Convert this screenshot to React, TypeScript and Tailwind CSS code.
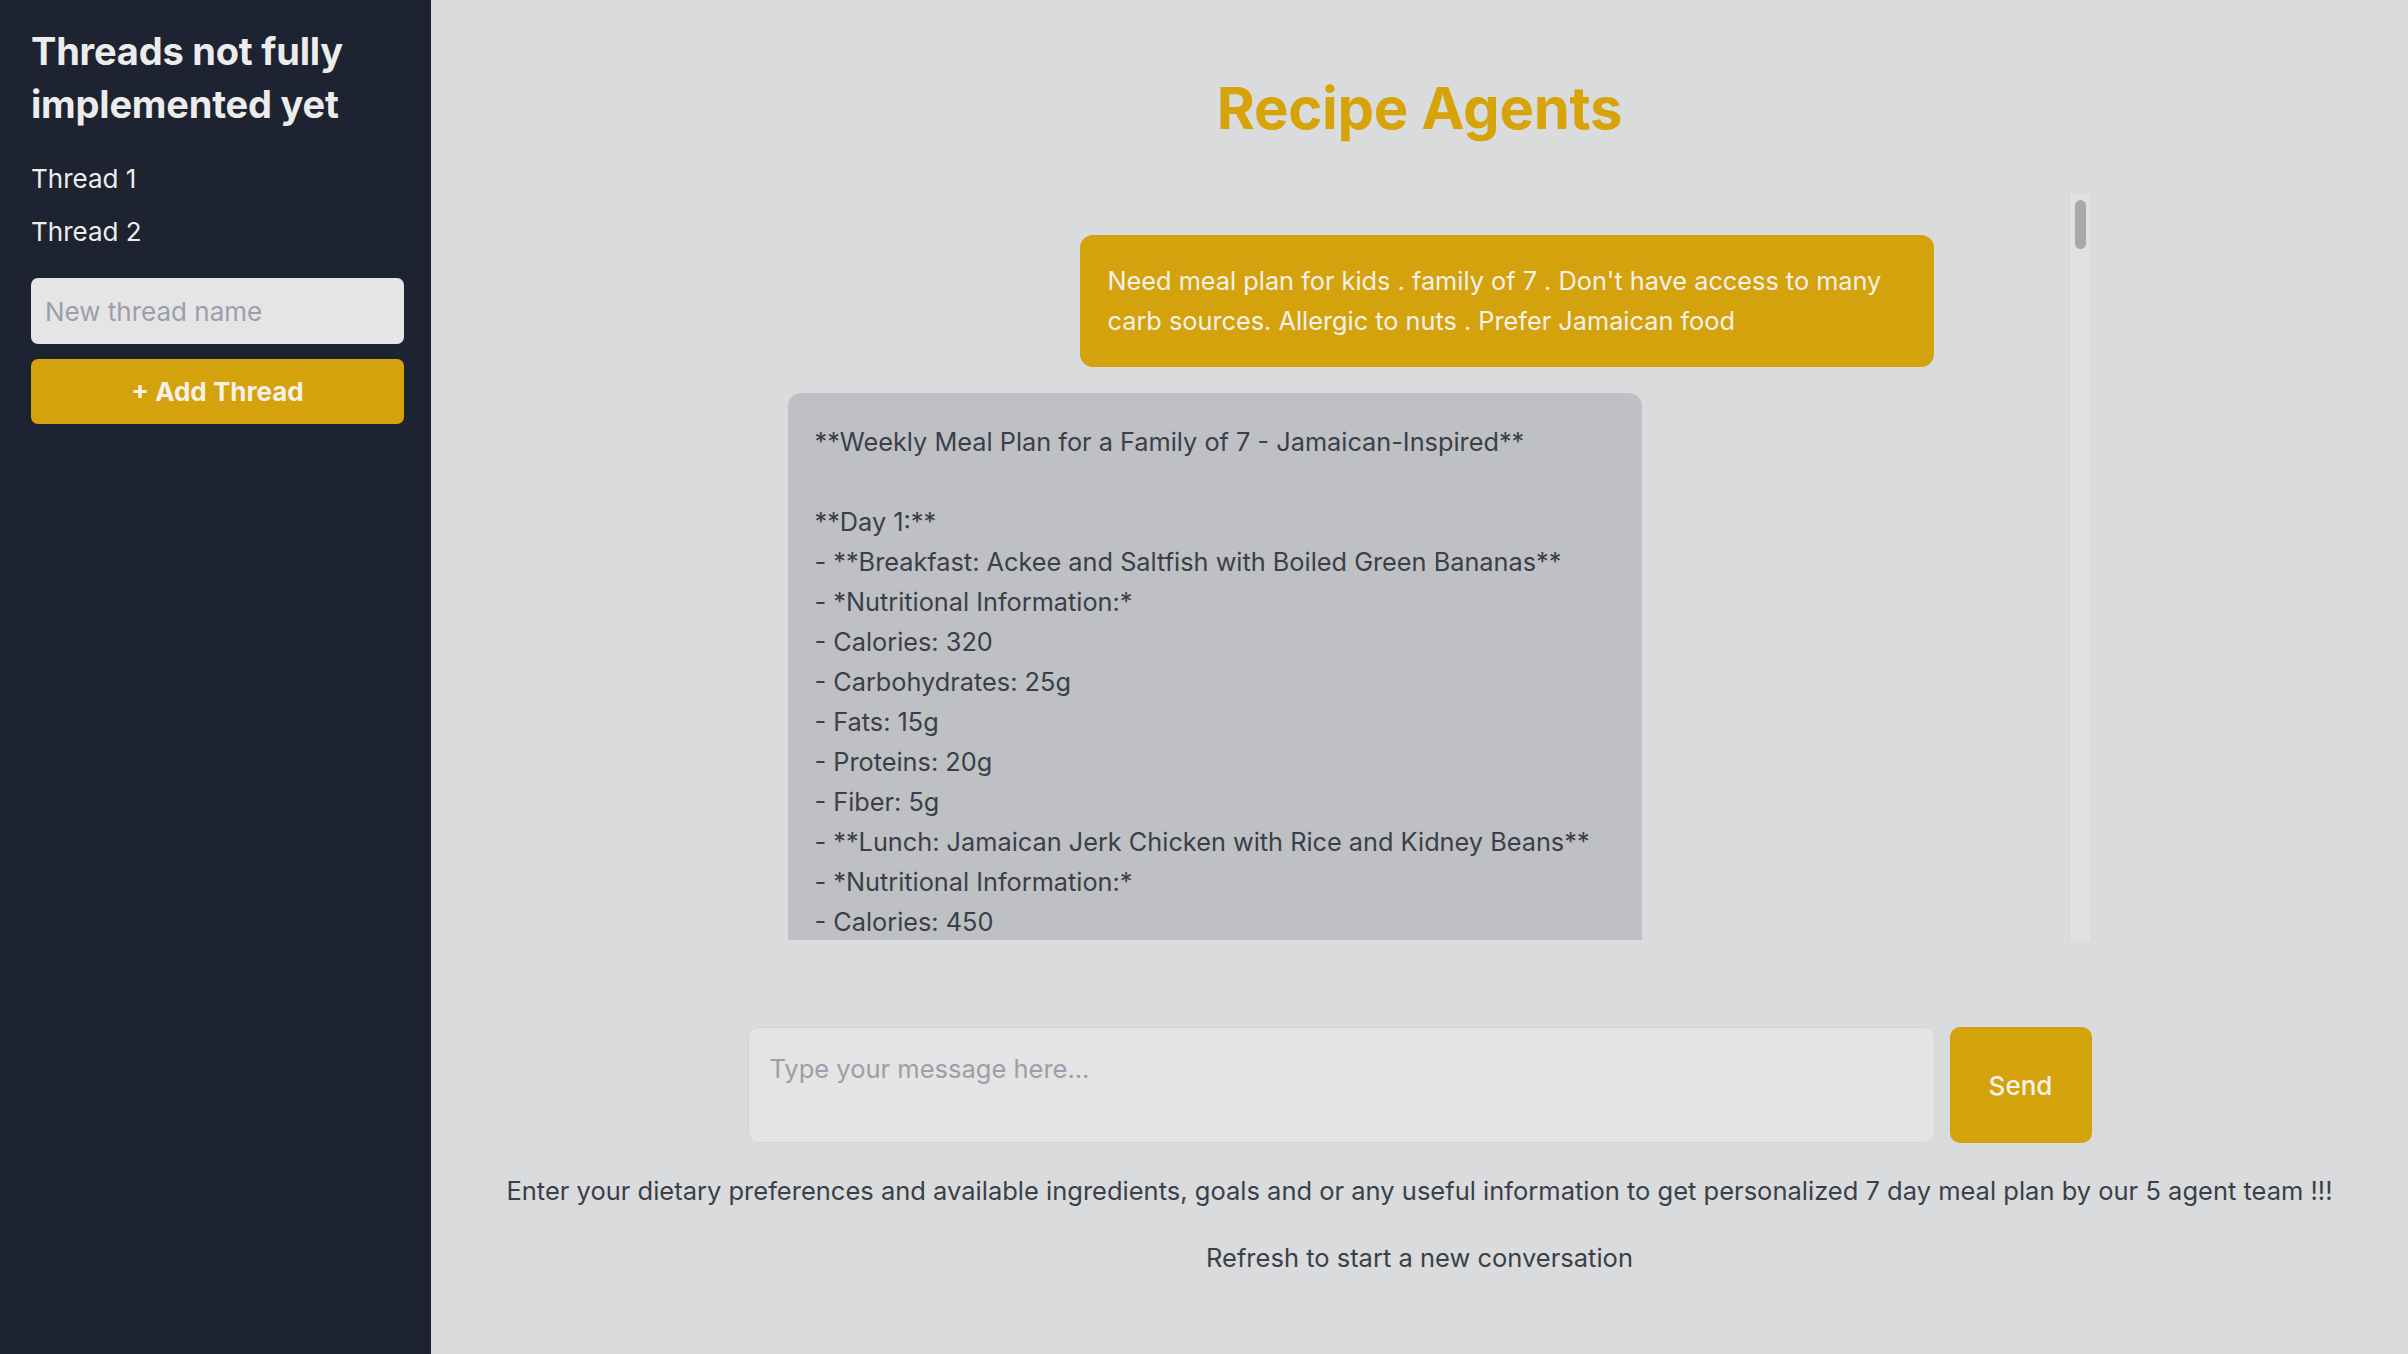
import { useState } from "react";

const aiReply = `**Weekly Meal Plan for a Family of 7 - Jamaican-Inspired**

**Day 1:**
- **Breakfast: Ackee and Saltfish with Boiled Green Bananas**
- *Nutritional Information:*
- Calories: 320
- Carbohydrates: 25g
- Fats: 15g
- Proteins: 20g
- Fiber: 5g
- **Lunch: Jamaican Jerk Chicken with Rice and Kidney Beans**
- *Nutritional Information:*
- Calories: 450
- Carbohydrates: 40g
- Fats: 18g
- Proteins: 30g
- Fiber: 6g`;

export default function App() {
    const [threads] = useState(["Thread 1", "Thread 2"]);

    return (
        <div className="flex h-[1354px] w-full overflow-hidden bg-[#dadbdd] font-['Inter',sans-serif]">
            {/* Sidebar */}
            <aside className="w-[431px] shrink-0 bg-[#1d2330] pl-[31px] pr-[27px] pt-[25px]">
                <h2 className="text-[38px] font-bold leading-[53px] tracking-[-0.2px] text-[#ececec]">
                    Threads not fully implemented yet
                </h2>
                <ul className="mt-[21px]">
                    {threads.map(t => (
                        <li key={t} className="text-[26px] leading-[53px] text-[#ededed]">{t}</li>
                    ))}
                </ul>
                <input
                    className="mt-[20px] h-[66px] w-full rounded-[7px] bg-[#e5e5e6] px-[14px] text-[26px] text-gray-800 outline-none placeholder:text-[#9a9fa9]"
                    placeholder="New thread name"
                />
                <button className="mt-[15px] h-[65px] w-full rounded-[7px] bg-[#d4a20c] text-[26px] font-bold text-[#f4f1ea]">
                    + Add Thread
                </button>
            </aside>

            {/* Main */}
            <main className="flex flex-1 flex-col items-center pt-[73px]">
                <h1 className="text-[58px] font-bold leading-[70px] tracking-[-0.3px] text-[#d6a309]">Recipe Agents</h1>

                <div className="mt-[51px] flex h-[746px] w-[1344px]">
                    <div className="flex-1 overflow-hidden pt-[41px]">
                        <div className="ml-auto mr-[135px] w-[854px] rounded-[13px] bg-[#d4a20c] px-[28px] py-[26px] text-[25.3px] leading-[40px] text-[#f4f1ea]">
                            Need meal plan for kids . family of 7 . Don't have access to many carb sources. Allergic to nuts . Prefer Jamaican food
                        </div>
                        <div className="ml-[40px] mt-[26px] w-[854px] whitespace-pre-wrap rounded-[13px] bg-[#bfc0c4] pb-[26px] pl-[27px] pr-[20px] pt-[29px] text-[25.3px] leading-[40px] text-[#3a3f4a]">
                            {aiReply}
                        </div>
                    </div>
                    <div className="w-[23px] shrink-0 border-x border-[#d3d4d5] bg-[#e1e1e2] px-[5px] pt-[6px]">
                        <div className="h-[49px] rounded-full bg-[#a9a9aa]" />
                    </div>
                </div>

                <div className="mt-[87px] flex w-[1344px] gap-[15px]">
                    <textarea
                        className="h-[116px] flex-1 resize-none rounded-[10px] border border-[#d3d4d6] bg-[#e4e4e5] px-[21px] pt-[21px] text-[25.5px] leading-[39px] text-gray-800 outline-none placeholder:text-[#9a9fa9]"
                        placeholder="Type your message here..."
                    />
                    <button className="h-[116px] w-[142px] rounded-[10px] bg-[#d4a20c] text-[26px] font-medium text-[#f4f1ea]">
                        Send
                    </button>
                </div>

                <p className="mt-[28px] text-[25.5px] leading-[39px] text-[#3b3f48]">
                    Enter your dietary preferences and available ingredients, goals and or any useful information to get personalized 7 day meal plan by our 5 agent team !!!
                </p>
                <p className="mt-[28px] text-[25.5px] leading-[39px] text-[#3b3f48]">Refresh to start a new conversation</p>
            </main>
        </div>
    );
}
